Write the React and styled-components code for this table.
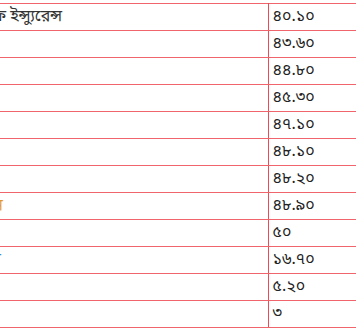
import React from "react";
import styled, { createGlobalStyle } from "styled-components";

const rows = [
  { name: "লাইফ ইন্স্যুরেন্স", end: 62, value: "৪০.১০" },
  { value: "৪৩.৬০" },
  { value: "৪৪.৮০" },
  { value: "৪৫.৩০" },
  { value: "৪৭.১০" },
  { value: "৪৮.১০" },
  { value: "৪৮.২০" },
  { name: "ন", end: 3, tone: "orange", value: "৪৮.৯০" },
  { value: "৫০" },
  { name: "ন", end: 1, tone: "blue", value: "১৬.৭০" },
  { value: "৫.২০" },
  { value: "৩" },
];

const tones = {
  orange: "#e39a2a",
  blue: "#3a8fd6",
};

const GlobalStyle = createGlobalStyle`
  html, body {
    margin: 0;
    padding: 0;
    background: #ffffff;
    overflow: hidden;
  }
  body {
    width: 356px;
    height: 331px;
    font-family: "Noto Sans Bengali", "Lohit Bengali", "FreeSerif", "DejaVu Sans", sans-serif;
    color: #222222;
  }
`;

const Table = styled.table`
  border-collapse: collapse;
  margin-top: 3px;
  table-layout: fixed;
  width: 390px;
`;

const Row = styled.tr`
  height: 27px;
`;

const NameCell = styled.td`
  width: 268px;
  padding: 0;
  border-top: 1px solid #f0646c;
  border-bottom: 1px solid #f0646c;
  border-right: 1px solid #ec4a55;
  height: 26px;
  vertical-align: middle;
`;

const ValueCell = styled.td`
  padding: 0 0 0 4px;
  border-top: 1px solid #f0646c;
  border-bottom: 1px solid #f0646c;
  height: 26px;
  font-size: 16px;
  line-height: 26px;
  color: #222222;
  white-space: nowrap;
  vertical-align: middle;
`;

const NameText = styled.div`
  display: flex;
  justify-content: flex-end;
  width: ${(p) => p.$end}px;
  white-space: nowrap;
  font-size: 16px;
  line-height: 26px;
  color: ${(p) => (p.$tone ? tones[p.$tone] : "#333333")};
`;

export default function App() {
  return (
    <>
      <GlobalStyle />
      <Table>
        <colgroup>
          <col style={{ width: 268 }} />
          <col />
        </colgroup>
        <tbody>
          {rows.map((r, i) => (
            <Row key={i}>
              <NameCell>
                {r.name && (
                  <NameText $end={r.end} $tone={r.tone}>
                    <span>{r.name}</span>
                  </NameText>
                )}
              </NameCell>
              <ValueCell>{r.value}</ValueCell>
            </Row>
          ))}
        </tbody>
      </Table>
    </>
  );
}
